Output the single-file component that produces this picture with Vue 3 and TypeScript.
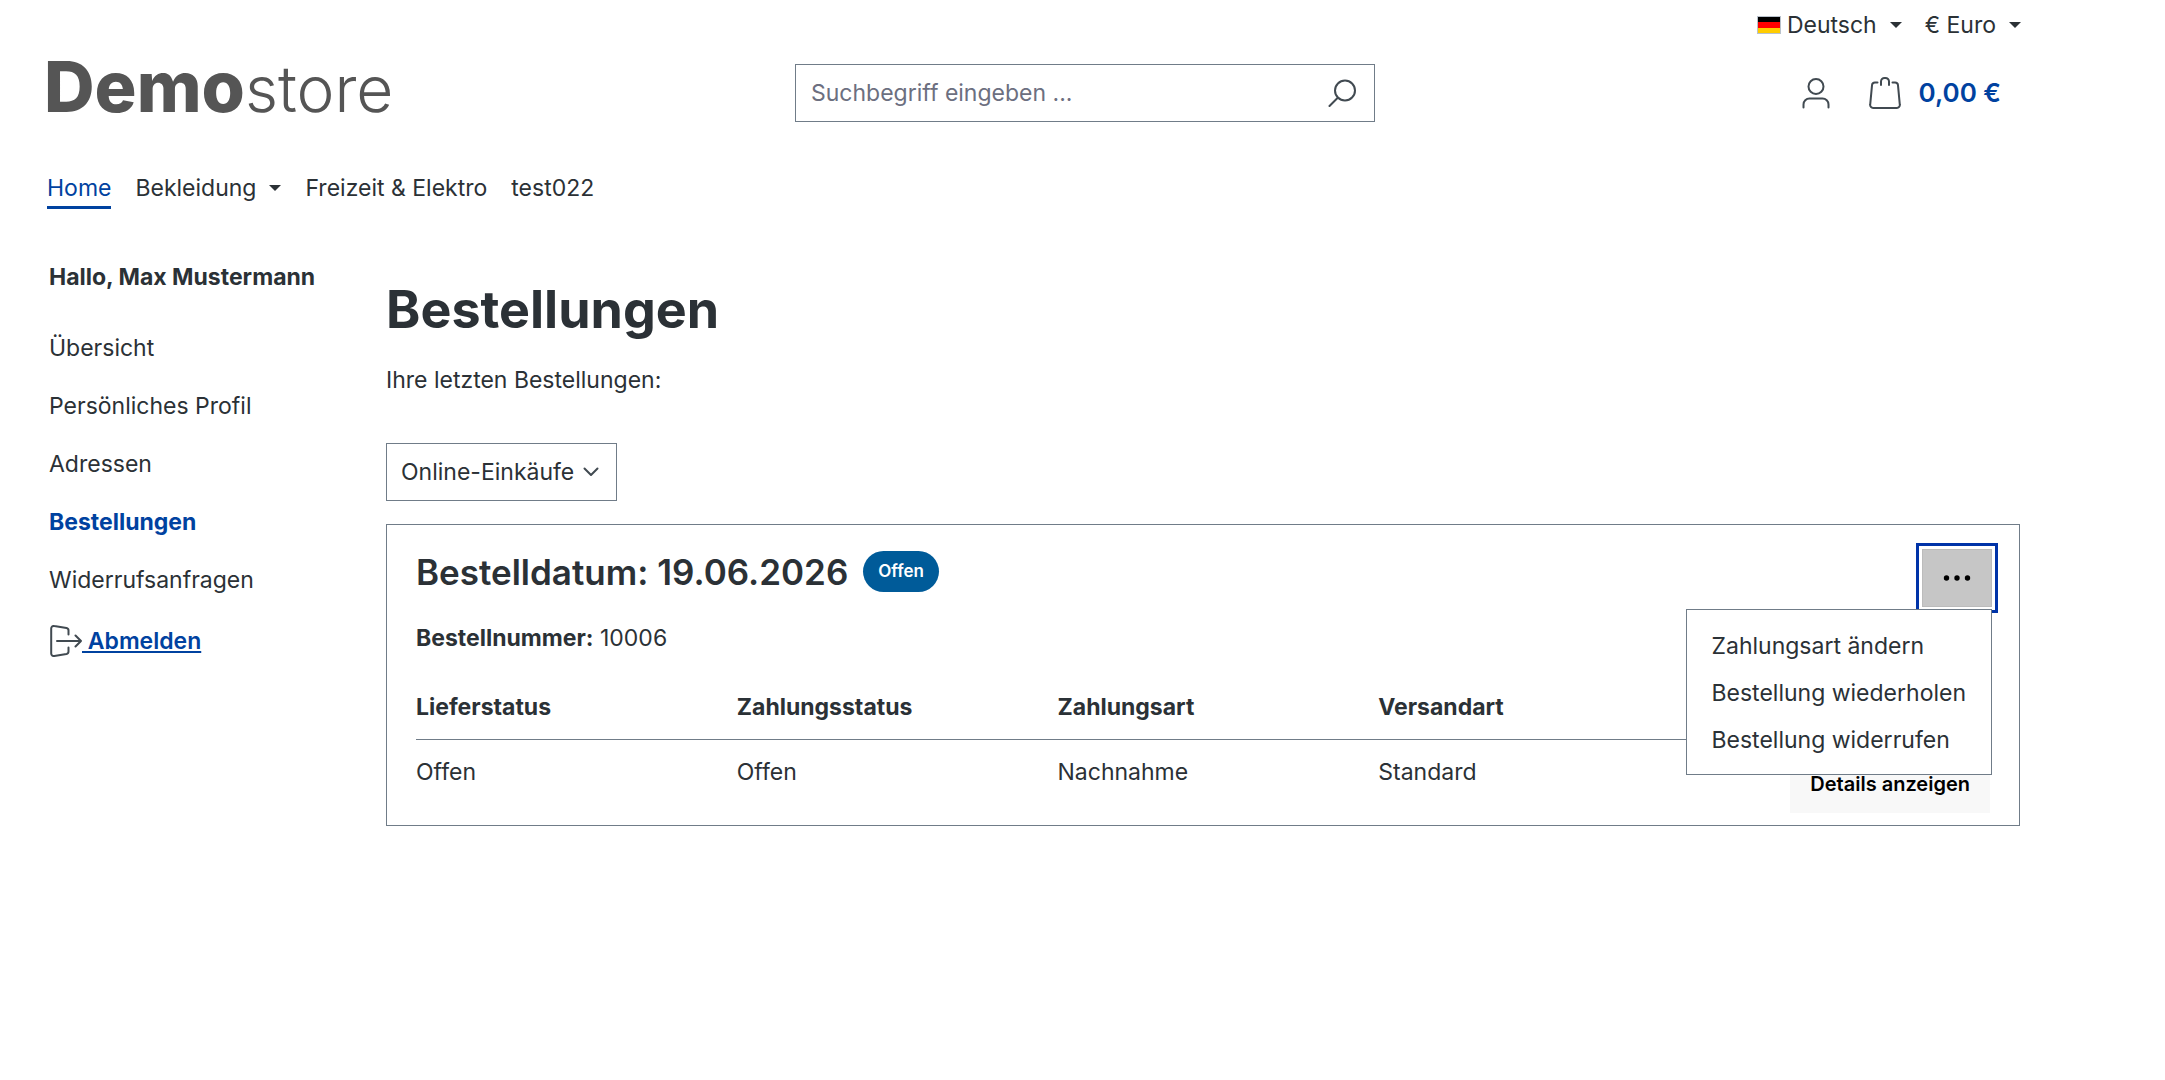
<script setup lang="ts">
import { ref } from 'vue'

const navItems = [
  { label: 'Home', active: true, dropdown: false },
  { label: 'Bekleidung', active: false, dropdown: true },
  { label: 'Freizeit & Elektro', active: false, dropdown: false },
  { label: 'test022', active: false, dropdown: false },
]

const accountItems = [
  { label: 'Übersicht', active: false },
  { label: 'Persönliches Profil', active: false },
  { label: 'Adressen', active: false },
  { label: 'Bestellungen', active: true },
  { label: 'Widerrufsanfragen', active: false },
]

const orderActions = ['Zahlungsart ändern', 'Bestellung wiederholen', 'Bestellung widerrufen']

const search = ref('')
const menuOpen = ref(true)
</script>

<template>
  <div class="page">
    <div class="top-bar">
      <button type="button" class="top-button">
        <svg class="flag" viewBox="0 0 24 18" aria-hidden="true">
          <rect width="24" height="18" fill="#b9c2cc" />
          <rect x="1" y="1" width="22" height="5" fill="#000" />
          <rect x="1" y="6" width="22" height="6" fill="#f00" />
          <rect x="1" y="12" width="22" height="5" fill="#fc0" />
        </svg>
        <span>Deutsch</span>
        <span class="caret"></span>
      </button>
      <button type="button" class="top-button">
        <span>€ Euro</span>
        <span class="caret"></span>
      </button>
    </div>

    <header class="header">
      <a href="#" class="logo"><span class="logo-bold">Demo</span><span class="logo-light">store</span></a>
      <form class="search" role="search" @submit.prevent>
        <input v-model="search" type="search" class="search-input" placeholder="Suchbegriff eingeben ..." aria-label="Suchbegriff eingeben" />
        <button type="submit" class="search-button" aria-label="Suchen">
          <svg class="search-icon" viewBox="0 0 28 28" fill="none" stroke="currentColor" stroke-width="2" stroke-linecap="round">
            <circle cx="17" cy="11.5" r="10" />
            <path d="M9.500 19 1.500 27" />
          </svg>
        </button>
      </form>
      <div class="header-actions">
        <button type="button" class="icon-button" aria-label="Ihr Konto">
          <svg class="user-icon" viewBox="0 0 28 32" fill="none" stroke="currentColor" stroke-width="2" stroke-linecap="round">
            <circle cx="14" cy="9.500" r="7.500" />
            <path d="M1.500 30.500v-3a6 6 0 0 1 6-6h13a6 6 0 0 1 6 6v3" />
          </svg>
        </button>
        <a href="#" class="cart">
          <svg class="bag-icon" viewBox="0 0 32 32" fill="none" stroke="currentColor" stroke-width="2" stroke-linecap="round" aria-hidden="true">
            <path d="M8.500 5.500H6A3 3 0 0 0 3 8.300L1.200 27.500A3 3 0 0 0 4.200 31h23.600a3 3 0 0 0 3-3.500L29 8.300a3 3 0 0 0-3-2.800h-2.500" />
            <path d="M12 8V4.500A3.500 3.500 0 0 1 15.500 1h1A3.500 3.500 0 0 1 20 4.500V8" />
          </svg>
          <span>0,00 €</span>
        </a>
      </div>
    </header>

    <nav class="main-nav" aria-label="Hauptnavigation">
      <a v-for="item in navItems" :key="item.label" href="#" class="nav-link" :class="{ active: item.active }">
        <span>{{ item.label }}</span>
        <span v-if="item.dropdown" class="caret"></span>
      </a>
    </nav>

    <div class="content">
      <aside class="sidebar">
        <p class="greeting">Hallo, Max Mustermann</p>
        <nav class="account-nav" aria-label="Kontonavigation">
          <a v-for="item in accountItems" :key="item.label" href="#" class="account-link" :class="{ active: item.active }">{{ item.label }}</a>
        </nav>
        <a href="#" class="logout">
          <svg class="logout-icon" viewBox="0 0 32 32" fill="none" stroke="currentColor" stroke-width="2" stroke-linecap="round" stroke-linejoin="round" aria-hidden="true">
            <path d="M18.500 9.500V5.500a2.500 2.500 0 0 0-2-2.500L4.300 1A2.600 2.600 0 0 0 1.200 3.600v24.800A2.600 2.600 0 0 0 4.300 31l12.200-2a2.500 2.500 0 0 0 2-2.500v-4" />
            <path d="M7 16h24M25.500 10.500 31 16l-5.500 5.500" />
          </svg>
          <span class="logout-text">&nbsp;Abmelden</span>
        </a>
      </aside>

      <main class="orders">
        <h1 class="title">Bestellungen</h1>
        <p class="intro">Ihre letzten Bestellungen:</p>
        <div class="filter">
          <select class="filter-select" aria-label="Art der Bestellungen">
            <option>Online-Einkäufe</option>
          </select>
          <svg class="chevron" viewBox="0 0 16 10" fill="none" stroke="currentColor" stroke-width="2" stroke-linecap="round" stroke-linejoin="round" aria-hidden="true">
            <path d="M1.500 1.500 8 8l6.500-6.500" />
          </svg>
        </div>

        <section class="order">
          <div class="order-header">
            <h2 class="order-title">Bestelldatum: 19.06.2026</h2>
            <span class="badge">Offen</span>
            <div class="order-menu">
              <button type="button" class="menu-button" aria-label="Aktionen" :aria-expanded="menuOpen" @click="menuOpen = !menuOpen">
                <svg class="dots" viewBox="0 0 28 6" fill="currentColor" aria-hidden="true">
                  <circle cx="3.500" cy="3" r="2.700" />
                  <circle cx="14" cy="3" r="2.700" />
                  <circle cx="24.500" cy="3" r="2.700" />
                </svg>
              </button>
              <div v-if="menuOpen" class="dropdown">
                <button v-for="action in orderActions" :key="action" type="button" class="dropdown-item">{{ action }}</button>
              </div>
            </div>
          </div>
          <div class="order-body">
            <p class="order-number"><strong>Bestellnummer:</strong> 10006</p>
            <table class="order-table">
              <thead>
                <tr>
                  <th scope="col">Lieferstatus</th>
                  <th scope="col">Zahlungsstatus</th>
                  <th scope="col">Zahlungsart</th>
                  <th scope="col">Versandart</th>
                  <th class="action-cell"></th>
                </tr>
              </thead>
              <tbody>
                <tr>
                  <td>Offen</td>
                  <td>Offen</td>
                  <td>Nachnahme</td>
                  <td>Standard</td>
                  <td class="action-cell"><button type="button" class="details-button">Details anzeigen</button></td>
                </tr>
              </tbody>
            </table>
          </div>
        </section>
      </main>
    </div>
  </div>
</template>

<style>
body {
  margin: 0;
  background: #fff;
}
</style>

<style scoped>
.page {
  padding: 0 145px 48px 48px;
  color: #2b3136;
  font-family: Inter, "Liberation Sans", sans-serif;
  font-size: 23px;
  line-height: 34px;
}

button,
input,
select {
  margin: 0;
  padding: 0;
  border: 0;
  border-radius: 0;
  background: none;
  color: inherit;
  font: inherit;
}

button {
  cursor: pointer;
}

a {
  color: inherit;
  text-decoration: none;
}

p,
h1,
h2 {
  margin: 0;
}

svg {
  display: block;
  flex: none;
}

.caret {
  border: 6px solid transparent;
  border-top-color: currentColor;
  border-bottom: 0;
}

.top-bar {
  display: flex;
  justify-content: flex-end;
  gap: 23px;
  margin-right: -1px;
  padding: 8px 0;
}

.top-button {
  display: flex;
  align-items: center;
}

.top-button .caret,
.nav-link .caret {
  margin-left: 13px;
}

.flag {
  width: 24px;
  height: 18px;
  margin-right: 6px;
}

.header {
  display: grid;
  grid-template-columns: 747fr 580fr 645fr;
  align-items: center;
  padding: 14px 0 49px;
}

.logo {
  align-self: start;
  margin: -6px 0 0 -4px;
  color: #555;
  font-size: 70px;
  line-height: 58px;
}

.logo-bold {
  font-weight: 800;
}

.logo-light {
  font-size: 64px;
  font-weight: 300;
}

.search {
  display: flex;
  box-sizing: border-box;
  height: 58px;
  border: 1px solid #707c88;
}

.search-input {
  flex: 1;
  min-width: 0;
  padding-left: 15px;
  outline: 0;
  appearance: none;
}

.search-input::placeholder {
  color: #6c6f80;
  opacity: 1;
}

.search-button {
  padding: 0 18px;
}

.search-icon {
  width: 28px;
  height: 28px;
}

.search-icon,
.user-icon,
.bag-icon,
.logout-icon,
.chevron {
  color: #414a51;
}

.header-actions {
  display: flex;
  align-items: center;
  justify-content: flex-end;
  gap: 39px;
  padding-right: 19px;
}

.user-icon {
  width: 28px;
  height: 32px;
}

.bag-icon {
  width: 32px;
  height: 32px;
}

.cart {
  display: flex;
  align-items: center;
  gap: 18px;
  color: #0042a0;
  font-size: 26px;
  font-weight: 600;
}

.main-nav {
  display: flex;
  gap: 24px;
  margin-left: -1px;
}

.nav-link {
  display: flex;
  align-items: center;
  padding-bottom: 1px;
  border-bottom: 3px solid transparent;
}

.nav-link.active {
  border-color: #0042a0;
  color: #0042a0;
}

.content {
  display: grid;
  grid-template-columns: 307px 1fr;
  gap: 30px;
  padding: 51px 0 0 1px;
}

.greeting {
  margin-bottom: 25px;
  font-weight: 700;
}

.account-nav {
  display: flex;
  flex-direction: column;
}

.account-link {
  padding: 12px 0;
}

.account-link.active {
  color: #0042a0;
  font-weight: 700;
}

.logout {
  display: flex;
  align-items: center;
  margin-top: 15px;
}

.logout-icon {
  width: 32px;
  height: 32px;
  margin-left: 1px;
}

.logout-text {
  color: #0042a0;
  font-weight: 600;
  text-decoration: underline;
}

.orders {
  min-width: 0;
  padding-top: 19px;
}

.title {
  font-size: 52px;
  font-weight: 700;
  line-height: 62px;
}

.intro {
  margin: 22px 0 46px;
}

.filter {
  display: grid;
  width: 231px;
  margin-bottom: 23px;
  align-items: center;
}

.filter-select {
  grid-area: 1 / 1;
  height: 58px;
  padding: 0 14px;
  border: 1px solid #707c88;
  appearance: none;
}

.chevron {
  grid-area: 1 / 1;
  justify-self: end;
  width: 16px;
  height: 10px;
  margin-right: 18px;
  pointer-events: none;
}

.order {
  border: 1px solid #707c88;
}

.order-header {
  display: flex;
  align-items: flex-start;
  padding: 24px 27px 0 29px;
}

.order-title {
  font-size: 35px;
  font-weight: 600;
  line-height: 46px;
}

.badge {
  margin: 2px 0 0 15px;
  padding: 0 15px;
  border-radius: 21px;
  background: #005b99;
  color: #fff;
  font-size: 17px;
  font-weight: 600;
  line-height: 41px;
}

.order-menu {
  position: relative;
  margin-left: auto;
}

.menu-button {
  display: flex;
  align-items: center;
  justify-content: center;
  width: 70px;
  height: 58px;
  border: 1px solid #bbb;
  background: #c6c6c6;
  color: #000;
  outline: 3px solid #0033a8;
  outline-offset: 3px;
}

.dots {
  width: 28px;
  height: 6px;
}

.dropdown {
  position: absolute;
  top: 60px;
  right: 0;
  z-index: 1;
  padding: 12px 0 11px;
  border: 1px solid #707c88;
  background: #fff;
}

.dropdown-item {
  display: block;
  width: 100%;
  padding: 7px 25px 6px;
  text-align: left;
  white-space: nowrap;
}

.order-body {
  padding: 14px 29px 12px;
}

.order-table {
  width: 100%;
  margin-top: 35px;
  border-collapse: collapse;
  table-layout: fixed;
}

.order-table th,
.order-table td {
  padding: 0;
  text-align: left;
  vertical-align: top;
}

.order-table th {
  padding-bottom: 15px;
  border-bottom: 1px solid #707c88;
  font-weight: 700;
}

.order-table td {
  padding-top: 15px;
}

.order-table .action-cell {
  width: 291px;
  text-align: right;
}

.details-button {
  display: block;
  height: 58px;
  margin-left: auto;
  padding: 0 20px;
  background: #f8f8f8;
  color: #000;
  font-size: 20px;
  font-weight: 600;
}
</style>
